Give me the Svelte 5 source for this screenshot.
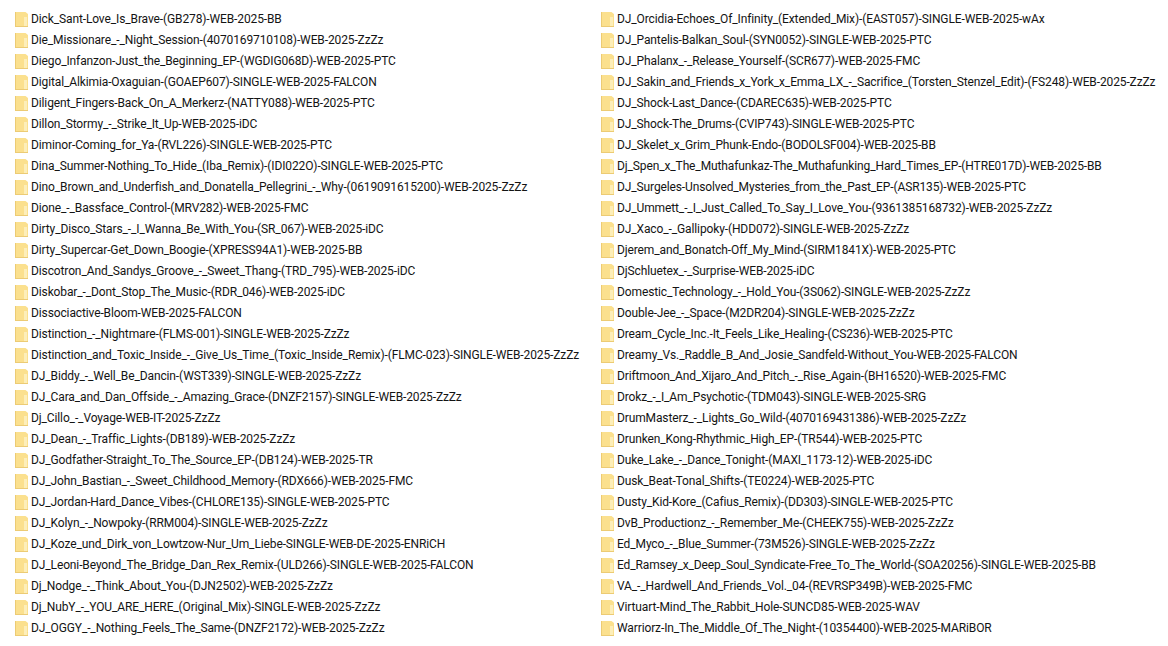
<script lang="ts">
  const left = [
    "Dick_Sant-Love_Is_Brave-(GB278)-WEB-2025-BB",
    "Die_Missionare_-_Night_Session-(4070169710108)-WEB-2025-ZzZz",
    "Diego_Infanzon-Just_the_Beginning_EP-(WGDIG068D)-WEB-2025-PTC",
    "Digital_Alkimia-Oxaguian-(GOAEP607)-SINGLE-WEB-2025-FALCON",
    "Diligent_Fingers-Back_On_A_Merkerz-(NATTY088)-WEB-2025-PTC",
    "Dillon_Stormy_-_Strike_It_Up-WEB-2025-iDC",
    "Diminor-Coming_for_Ya-(RVL226)-SINGLE-WEB-2025-PTC",
    "Dina_Summer-Nothing_To_Hide_(Iba_Remix)-(IDI022O)-SINGLE-WEB-2025-PTC",
    "Dino_Brown_and_Underfish_and_Donatella_Pellegrini_-_Why-(0619091615200)-WEB-2025-ZzZz",
    "Dione_-_Bassface_Control-(MRV282)-WEB-2025-FMC",
    "Dirty_Disco_Stars_-_I_Wanna_Be_With_You-(SR_067)-WEB-2025-iDC",
    "Dirty_Supercar-Get_Down_Boogie-(XPRESS94A1)-WEB-2025-BB",
    "Discotron_And_Sandys_Groove_-_Sweet_Thang-(TRD_795)-WEB-2025-iDC",
    "Diskobar_-_Dont_Stop_The_Music-(RDR_046)-WEB-2025-iDC",
    "Dissociactive-Bloom-WEB-2025-FALCON",
    "Distinction_-_Nightmare-(FLMS-001)-SINGLE-WEB-2025-ZzZz",
    "Distinction_and_Toxic_Inside_-_Give_Us_Time_(Toxic_Inside_Remix)-(FLMC-023)-SINGLE-WEB-2025-ZzZz",
    "DJ_Biddy_-_Well_Be_Dancin-(WST339)-SINGLE-WEB-2025-ZzZz",
    "DJ_Cara_and_Dan_Offside_-_Amazing_Grace-(DNZF2157)-SINGLE-WEB-2025-ZzZz",
    "Dj_Cillo_-_Voyage-WEB-IT-2025-ZzZz",
    "DJ_Dean_-_Traffic_Lights-(DB189)-WEB-2025-ZzZz",
    "DJ_Godfather-Straight_To_The_Source_EP-(DB124)-WEB-2025-TR",
    "DJ_John_Bastian_-_Sweet_Childhood_Memory-(RDX666)-WEB-2025-FMC",
    "DJ_Jordan-Hard_Dance_Vibes-(CHLORE135)-SINGLE-WEB-2025-PTC",
    "DJ_Kolyn_-_Nowpoky-(RRM004)-SINGLE-WEB-2025-ZzZz",
    "DJ_Koze_und_Dirk_von_Lowtzow-Nur_Um_Liebe-SINGLE-WEB-DE-2025-ENRiCH",
    "DJ_Leoni-Beyond_The_Bridge_Dan_Rex_Remix-(ULD266)-SINGLE-WEB-2025-FALCON",
    "Dj_Nodge_-_Think_About_You-(DJN2502)-WEB-2025-ZzZz",
    "Dj_NubY_-_YOU_ARE_HERE_(Original_Mix)-SINGLE-WEB-2025-ZzZz",
    "DJ_OGGY_-_Nothing_Feels_The_Same-(DNZF2172)-WEB-2025-ZzZz",
  ];

  const right = [
    "DJ_Orcidia-Echoes_Of_Infinity_(Extended_Mix)-(EAST057)-SINGLE-WEB-2025-wAx",
    "DJ_Pantelis-Balkan_Soul-(SYN0052)-SINGLE-WEB-2025-PTC",
    "DJ_Phalanx_-_Release_Yourself-(SCR677)-WEB-2025-FMC",
    "DJ_Sakin_and_Friends_x_York_x_Emma_LX_-_Sacrifice_(Torsten_Stenzel_Edit)-(FS248)-WEB-2025-ZzZz",
    "DJ_Shock-Last_Dance-(CDAREC635)-WEB-2025-PTC",
    "DJ_Shock-The_Drums-(CVIP743)-SINGLE-WEB-2025-PTC",
    "DJ_Skelet_x_Grim_Phunk-Endo-(BODOLSF004)-WEB-2025-BB",
    "Dj_Spen_x_The_Muthafunkaz-The_Muthafunking_Hard_Times_EP-(HTRE017D)-WEB-2025-BB",
    "DJ_Surgeles-Unsolved_Mysteries_from_the_Past_EP-(ASR135)-WEB-2025-PTC",
    "DJ_Ummett_-_I_Just_Called_To_Say_I_Love_You-(9361385168732)-WEB-2025-ZzZz",
    "DJ_Xaco_-_Gallipoky-(HDD072)-SINGLE-WEB-2025-ZzZz",
    "Djerem_and_Bonatch-Off_My_Mind-(SIRM1841X)-WEB-2025-PTC",
    "DjSchluetex_-_Surprise-WEB-2025-iDC",
    "Domestic_Technology_-_Hold_You-(3S062)-SINGLE-WEB-2025-ZzZz",
    "Double-Jee_-_Space-(M2DR204)-SINGLE-WEB-2025-ZzZz",
    "Dream_Cycle_Inc.-It_Feels_Like_Healing-(CS236)-WEB-2025-PTC",
    "Dreamy_Vs._Raddle_B_And_Josie_Sandfeld-Without_You-WEB-2025-FALCON",
    "Driftmoon_And_Xijaro_And_Pitch_-_Rise_Again-(BH16520)-WEB-2025-FMC",
    "Drokz_-_I_Am_Psychotic-(TDM043)-SINGLE-WEB-2025-SRG",
    "DrumMasterz_-_Lights_Go_Wild-(4070169431386)-WEB-2025-ZzZz",
    "Drunken_Kong-Rhythmic_High_EP-(TR544)-WEB-2025-PTC",
    "Duke_Lake_-_Dance_Tonight-(MAXI_1173-12)-WEB-2025-iDC",
    "Dusk_Beat-Tonal_Shifts-(TE0224)-WEB-2025-PTC",
    "Dusty_Kid-Kore_(Cafius_Remix)-(DD303)-SINGLE-WEB-2025-PTC",
    "DvB_Productionz_-_Remember_Me-(CHEEK755)-WEB-2025-ZzZz",
    "Ed_Myco_-_Blue_Summer-(73M526)-SINGLE-WEB-2025-ZzZz",
    "Ed_Ramsey_x_Deep_Soul_Syndicate-Free_To_The_World-(SOA20256)-SINGLE-WEB-2025-BB",
    "VA_-_Hardwell_And_Friends_Vol._04-(REVRSP349B)-WEB-2025-FMC",
    "Virtuart-Mind_The_Rabbit_Hole-SUNCD85-WEB-2025-WAV",
    "Warriorz-In_The_Middle_Of_The_Night-(10354400)-WEB-2025-MARiBOR",
  ];

  const columns = [left, right];
</script>

<div class="listing">
  {#each columns as names}
    <ul class="column">
      {#each names as name}
        <li class="entry">
          <svg class="folder" width="13" height="15" viewBox="0 0 13 15" aria-hidden="true">
            <path d="M0 0h10.5l2.5 2v13H0z" fill="#fbe08e" />
            <path d="M0 0h1v15H0zM0 14h13v1H0z" fill="#eccb74" />
            <path d="M9 5h3v9H9z" fill="#fdeeb9" />
          </svg>
          <span class="name">{name}</span>
        </li>
      {/each}
    </ul>
  {/each}
</div>

<style>
  :global(body) {
    background: #fff;
  }

  .listing {
    display: grid;
    grid-template-columns: 586px 1fr;
    height: 646px;
    padding: 8px 0 0 15px;
    box-sizing: border-box;
    overflow: hidden;
    font-family: Roboto, "Noto Sans", sans-serif;
    font-size: 12px;
    letter-spacing: -0.12px;
    color: #141414;
  }

  .column {
    list-style: none;
    margin: 0;
    padding: 0;
  }

  .entry {
    display: flex;
    align-items: center;
    gap: 3px;
    height: 21px;
    white-space: nowrap;
  }

  .folder {
    flex: none;
    margin-top: 2px;
  }
</style>
